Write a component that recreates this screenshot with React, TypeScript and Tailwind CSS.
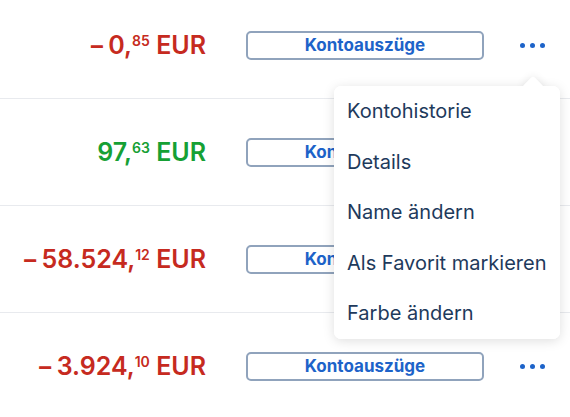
import React from "react";

type Row = { sign: string; main: string; cents: string; positive: boolean };

const rows: Row[] = [
  { sign: "−", main: "0,", cents: "85", positive: false },
  { sign: "", main: "97,", cents: "63", positive: true },
  { sign: "−", main: "58.524,", cents: "12", positive: false },
  { sign: "−", main: "3.924,", cents: "10", positive: false },
];

const menuItems = [
  "Kontohistorie",
  "Details",
  "Name ändern",
  "Als Favorit markieren",
  "Farbe ändern",
];

function Dots() {
  return (
    <div className="flex items-center gap-[5px] w-[26px]">
      <span className="block w-[5px] h-[5px] rounded-full bg-[#1d63c9]" />
      <span className="block w-[5px] h-[5px] rounded-full bg-[#1d63c9]" />
      <span className="block w-[5px] h-[5px] rounded-full bg-[#1d63c9]" />
    </div>
  );
}

export default function App() {
  return (
    <div
      className="relative w-[570px] h-[417px] overflow-hidden bg-white"
      style={{ fontFamily: "Inter, 'Noto Sans', sans-serif" }}
    >
      <div className="-mt-[8px]">
        {rows.map((r, i) => (
          <div
            key={i}
            className={`flex items-center h-[107px] ${i < rows.length - 1 ? "border-b border-[#e8eaee]" : ""}`}
          >
            <div
              className={`w-[206px] text-right text-[25px] font-semibold leading-none whitespace-nowrap ${r.positive ? "text-[#16a034]" : "text-[#c62a20]"}`}
            >
              {r.sign && <span className="mr-[3px]">{r.sign}</span>}
              <span>{r.main}</span>
              <span className="relative -top-[8px] text-[14px] font-semibold">{r.cents}</span>
              <span> EUR</span>
            </div>
            <button className="ml-[40px] w-[238px] h-[29px] border-2 border-[#90a3bc] rounded-[5px] bg-white text-[#1d63c9] text-[17px] font-bold leading-none flex items-center justify-center">
              Kontoauszüge
            </button>
            <div className="ml-[36px]">
              <Dots />
            </div>
          </div>
        ))}
      </div>

      <div className="absolute left-[334px] top-[86px] w-[226px] rounded-[7px] bg-white shadow-[0_2px_12px_rgba(0,0,0,0.13)]">
        <div className="absolute left-[191px] -top-[7px] w-[16px] h-[16px] rotate-45 rounded-[3px] bg-white shadow-[0_0_8px_rgba(0,0,0,0.1)]" />
        <div className="relative rounded-[7px] bg-white">
          {menuItems.map((m) => (
            <div
              key={m}
              className="h-[50.5px] flex items-center pl-[13px] text-[20px] text-[#1e3a5c] whitespace-nowrap"
            >
              {m}
            </div>
          ))}
        </div>
      </div>
    </div>
  );
}
